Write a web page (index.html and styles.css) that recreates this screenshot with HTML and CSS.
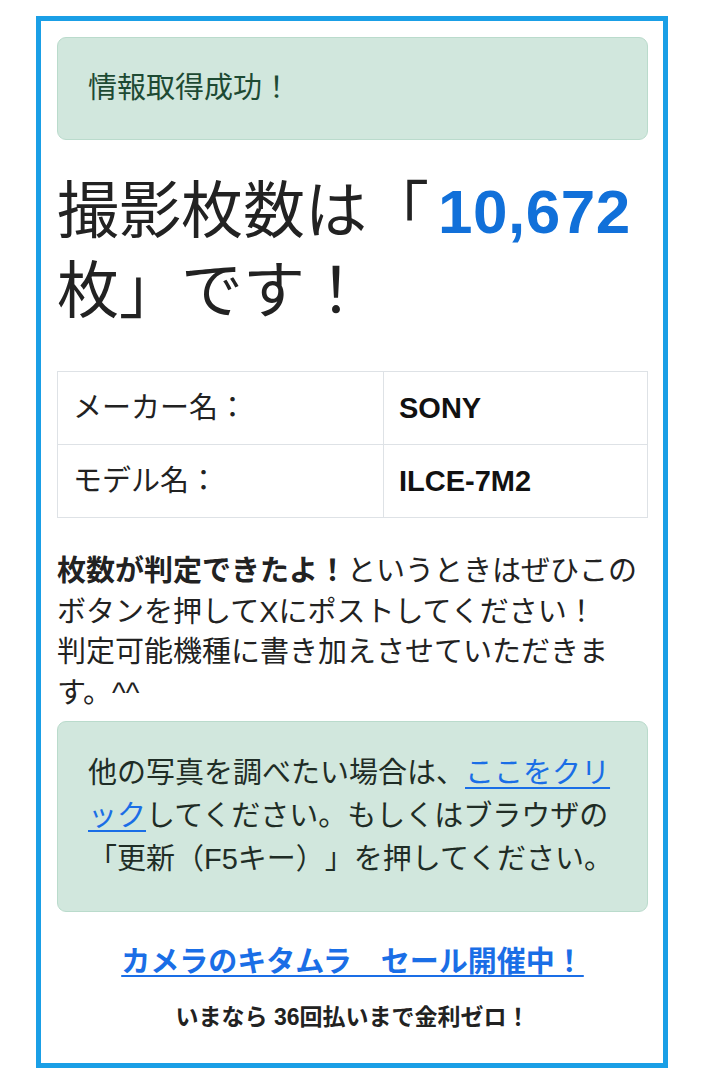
FILE: index.html
```html
<!DOCTYPE html>
<html lang="ja">
<head>
<meta charset="utf-8">
<title>撮影枚数チェッカー</title>
<link rel="stylesheet" href="styles.css">
</head>
<body>
<main class="panel">
  <div class="alert alert-done">情報取得成功！</div>

  <h1 class="result">撮影枚数は「<span class="count">10,672</span>枚」です！</h1>

  <table class="spec">
    <tr>
      <td class="spec-key">メーカー名：</td>
      <td class="spec-val">SONY</td>
    </tr>
    <tr>
      <td class="spec-key">モデル名：</td>
      <td class="spec-val">ILCE-7M2</td>
    </tr>
  </table>

  <p class="note"><strong>枚数が判定できたよ！</strong>というときはぜひこのボタンを押してXにポストしてください！<br>判定可能機種に書き加えさせていただきます。^^</p>

  <div class="alert alert-retry">他の写真を調べたい場合は、<a href="#" class="inline-link">ここをクリック</a>してください。もしくはブラウザの「更新（F5キー）」を押してください。</div>

  <div class="promo">
    <a href="#" class="promo-link">カメラのキタムラ　セール開催中！</a>
    <p class="promo-sub">いまなら 36回払いまで金利ゼロ！</p>
  </div>
</main>
</body>
</html>
```

FILE: styles.css
```css
* {
  box-sizing: border-box;
}

html, body {
  margin: 0;
  padding: 0;
  background: #ffffff;
}

body {
  font-family: "Liberation Sans", "Noto Sans CJK JP", sans-serif;
  font-size: 29px;
  color: #212529;
  padding-top: 16px;
  /* keep full-width brackets and punctuation at their full advance */
  text-spacing-trim: space-all;
}

.panel {
  width: 632px;
  margin-left: 36px;
  border: 5px solid #1a9fe6;
  padding: 16px 15px 30px 16px;
}

.alert {
  background: #d1e7dd;
  border: 1px solid #badbcc;
  border-radius: 9px;
  color: #0f5132;
}

.alert-done {
  padding: 30px 30px;
  line-height: 41px;
  color: #1d4a33;
}

.result {
  margin: 32px 0 0;
  font-size: 62px;
  font-weight: normal;
  line-height: 80px;
  color: #222222;
}

.count {
  padding-left: 9px;
  color: #1170d9;
  font-weight: bold;
  letter-spacing: 0.5px;
}

.spec {
  width: 100%;
  margin-top: 39px;
  border-collapse: collapse;
}

.spec td {
  border: 1px solid #dee2e6;
  padding: 15px 15px;
  line-height: 42px;
}

.spec-key {
  width: 326px;
  color: #222222;
}

.spec-val {
  font-weight: bold;
  color: #111111;
}

.note {
  margin: 33px 0 0;
  line-height: 40.6px;
  color: #222222;
}

.alert-retry {
  margin-top: 8px;
  padding: 30px 30px;
  line-height: 43px;
  color: #1f2d26;
}

.inline-link {
  color: #1a6ee6;
  text-decoration: underline;
  text-underline-offset: 4px;
}

.promo {
  margin-top: 29px;
  text-align: center;
}

.promo-link {
  display: inline-block;
  line-height: 42px;
  font-weight: bold;
  color: #1a6ee6;
  text-decoration: underline;
  text-decoration-thickness: 2px;
  text-underline-offset: 3px;
}

.promo-sub {
  margin: 18px 0 0;
  font-size: 23px;
  line-height: 32px;
  font-weight: bold;
  color: #222222;
}
```
